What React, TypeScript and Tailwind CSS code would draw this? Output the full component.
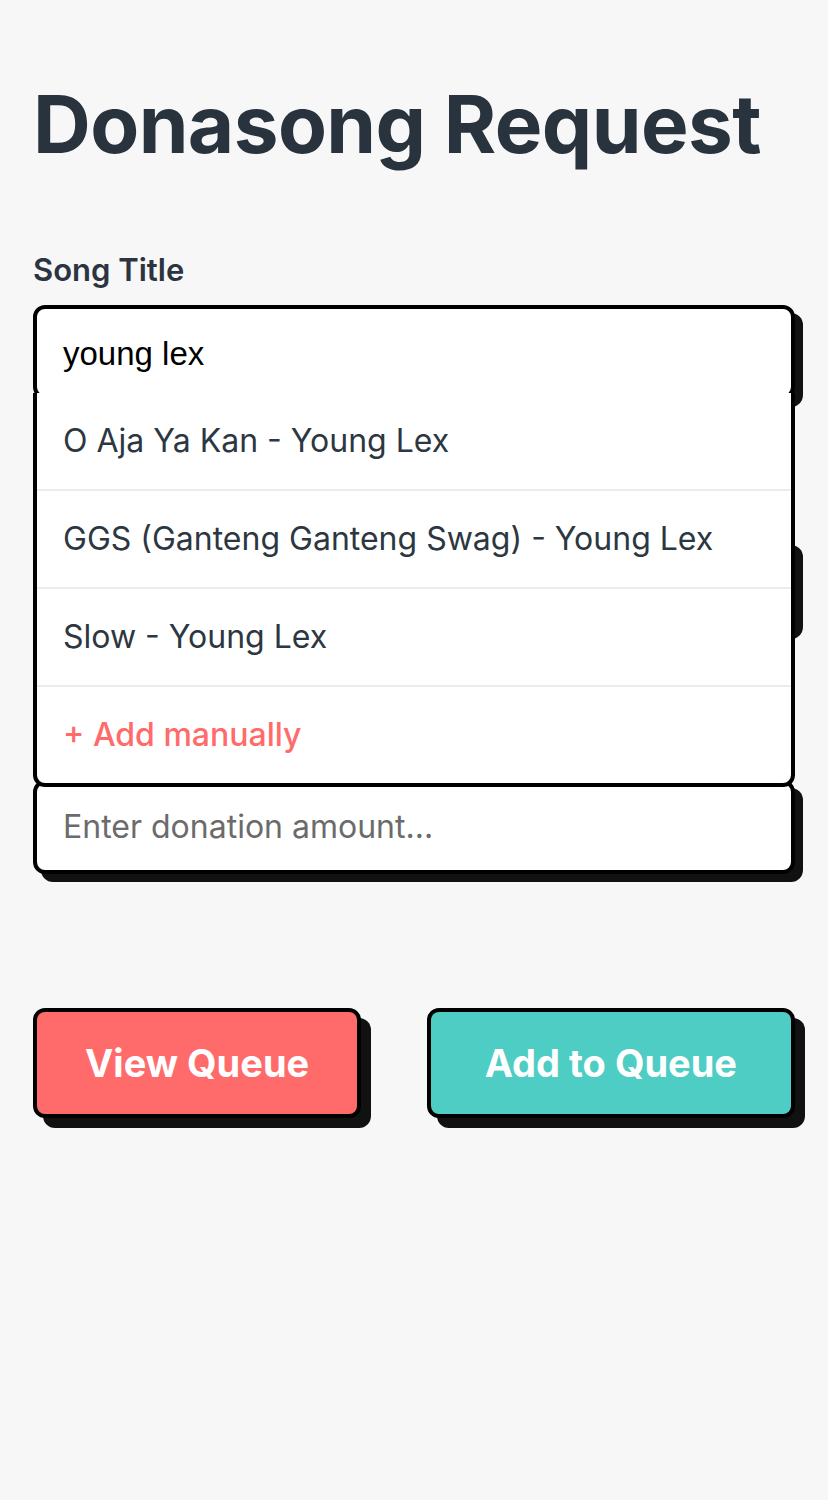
import React from "react";

function Field({ label, placeholder, value, labelGap }: { label: string; placeholder?: string; value?: string; labelGap: string }) {
  return (
    <div className={labelGap}>
      <div className="h-[36px] text-[31px] leading-[36px] font-semibold text-[#2b3440] mb-[17px] font-[Inter,sans-serif]">
        {label}
      </div>
      <div className="h-[94px] rounded-[12px] border-4 border-black bg-white shadow-[8px_8px_0_#111] flex items-center px-[26px]">
        {value ? (
          <span className="text-[33px] text-black pt-[4px] font-['Liberation_Sans',Arial,sans-serif]">{value}</span>
        ) : placeholder ? (
          <span className="text-[32px] text-[#6b6b6b] font-[Inter,sans-serif]">{placeholder}</span>
        ) : null}
      </div>
    </div>
  );
}

export default function App() {
  const items = ["O Aja Ya Kan - Young Lex", "GGS (Ganteng Ganteng Swag) - Young Lex", "Slow - Young Lex"];
  return (
    <div className="min-h-[1500px] bg-[#f7f7f7] px-[33px] pt-[76px] font-[Inter,sans-serif]">
      <h1 className="text-[80px] leading-[96px] font-bold tracking-[-0.6px] text-[#29333d]">
        Donasong Request
      </h1>

      <div className="relative mt-[80px]">
        <Field label="Song Title" value="young lex" labelGap="" />
        <div className="absolute left-0 right-0 top-[141px] z-10 bg-white border-4 border-t-0 border-black rounded-b-[12px] overflow-hidden">
          {items.map((t) => (
            <div key={t} className="h-[98px] flex items-center px-[26px] border-b-2 border-[#ececec] text-[32px] text-[#2d3741]">
              {t}
            </div>
          ))}
          <div className="h-[96px] flex items-center px-[26px] text-[32px] text-[#ff6b6b] font-medium">
            + Add manually
          </div>
        </div>
      </div>

      <Field label="" labelGap="mt-[85px]" />
      <Field label="" placeholder="Enter donation amount..." labelGap="mt-[96px]" />

      <div className="mt-[134px] flex justify-between">
        <button className="h-[110px] px-[48px] rounded-[12px] border-4 border-black bg-[#ff6b6b] shadow-[10px_10px_0_#111] text-white text-[38px] font-bold">
          View Queue
        </button>
        <button className="h-[110px] px-[54px] rounded-[12px] border-4 border-black bg-[#4ecdc4] shadow-[10px_10px_0_#111] text-white text-[38px] font-bold">
          Add to Queue
        </button>
      </div>
    </div>
  );
}
